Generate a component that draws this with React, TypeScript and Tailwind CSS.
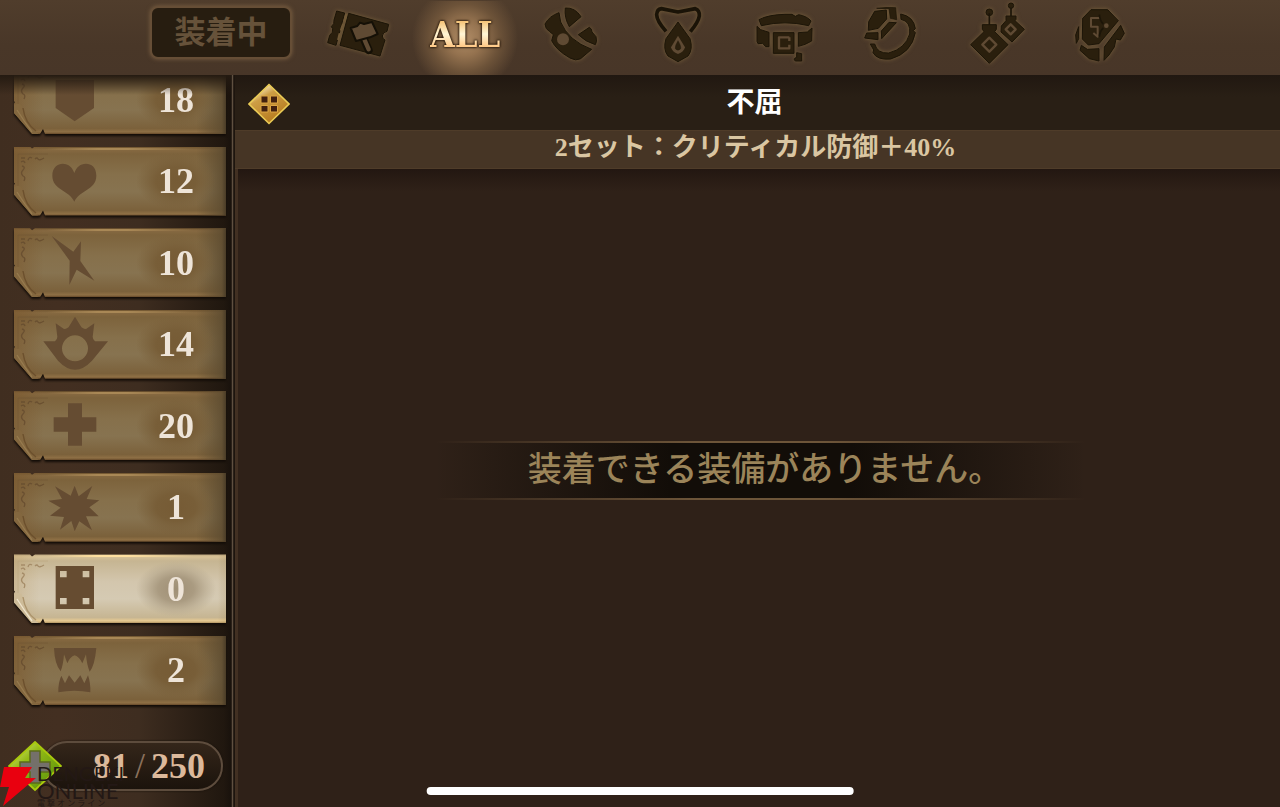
import React, { useState } from "react";

const INK = "#2a1f0d";
const GAP = "#5f4a33";

type Category = { id: string; label: string; viewBox: string; art: React.ReactNode };

const categories: Category[] = [
  {
    id: "ticket",
    label: "チケット",
    viewBox: "561 3 192 192",
    art: (
      <>
        <path d="M590 33 L614 39 L588 136 L563 128 L569 106 Q580 98 578 86 L574 80 Q584 72 582 60Z" />
        <path d="M626 40 L746 73 L741 94 Q728 96 727 108 Q728 118 735 120 L720 168 L600 136Z" />
        <path d="M619 42 L613 64 M609 72 L602 92 M599 100 L594 120" stroke="#6f5836" strokeWidth="6" fill="none" />
        <path d="M672 118 L686 150" stroke="#151006" strokeWidth="24" strokeLinecap="round" />
        <path d="M673 118 L686 148" stroke={GAP} strokeWidth="13" strokeLinecap="round" />
        <path d="M632 84 L652 78 L660 68 L672 72 L696 66 L713 102 L690 112 L648 123Z" fill={GAP} stroke="#151006" strokeWidth="6" />
      </>
    ),
  },
  {
    id: "glove",
    label: "腕輪",
    viewBox: "57 3 192 192",
    art: (
      <>
        <path d="M75 72 Q88 48 117 38 L122 66 Q145 122 215 148 L182 176 Q168 184 150 174 Q108 150 95 122 L100 104 L88 94 Q76 88 75 72Z" />
        <path d="M136 24 Q165 22 183 50 L148 80 Q132 52 136 24Z" />
        <path d="M175 104 L208 82 Q216 86 216 96 L228 110 Q232 125 226 134 Q195 125 175 104Z" />
        <circle cx="129" cy="118" r="18" fill={GAP} stroke="none" />
      </>
    ),
  },
  {
    id: "necklace",
    label: "首飾り",
    viewBox: "375 3 192 192",
    art: (
      <>
        <path d="M438 94 Q410 62 410 44 Q411 28 424 26 L474 36 L526 26 Q539 30 538 48 Q535 66 511 95" fill="none" stroke="#1a1307" strokeWidth="11" />
        <path d="M474 66 L510 116 Q520 148 504 168 L474 185 L444 168 Q428 148 438 116Z" />
        <path d="M474 107 L495 142 Q492 156 474 162 Q456 156 453 142Z" fill={GAP} stroke="none" />
        <path d="M474 122 Q484 138 482 146 Q474 155 466 146 Q464 138 474 122Z" strokeWidth="1" />
      </>
    ),
  },
  {
    id: "belt",
    label: "ベルト",
    viewBox: "693 3 192 192",
    art: (
      <>
        <path d="M717 59 Q745 44 795 43 L816 43 L826 49 L836 44 Q862 49 873 63 L866 77 Q795 60 724 77Z" />
        <path d="M711 79 L722 89 L747 97 L747 140 L737 140 L728 130 L714 131 L711 124Z" />
        <path d="M835 98 L862 96 L876 84 L875 123 Q856 135 835 139Z" />
        <rect x="760" y="98" width="62" height="62" />
        <path d="M808 112 H777 V145 H808 V134 M808 112 V123" fill="none" stroke={GAP} strokeWidth="7" />
        <path d="M830 158 L845 161 L845 183 L826 183 Q818 176 830 172Z" />
      </>
    ),
  },
  {
    id: "ring",
    label: "指輪",
    viewBox: "51 3 192 192",
    art: (
      <>
        <path d="M86 65 L104 34 L139 30 L140 57 L115 85 L85 91Z" />
        <path d="M110 25 L144 22 L167 23 L170 59 L151 55 L147 26Z" strokeWidth="2" />
        <path d="M147 67 L169 68 L125 116 L124 93Z" />
        <path d="M80 99 L114 98 L114 119 L74 114Z" />
        <path d="M182 42 Q221 49 226 86 L220 92 L226 98 Q215 159 152 177 Q112 181 99 158 L101 150 L91 132 L104 132 Q112 161 146 159 Q196 146 209 102 Q213 64 183 58Z" />
      </>
    ),
  },
  {
    id: "earring",
    label: "耳飾り",
    viewBox: "369 3 192 192",
    art: (
      <>
        <circle cx="448" cy="37" r="10" />
        <path d="M448 40 V74 M513 18 V48" strokeWidth="5" />
        <circle cx="513" cy="17" r="8" />
        <path d="M427 74 H469 V88 L464 95 L504 134 L448 190 L392 134 L432 95 L427 88Z" />
        <path d="M498 48 H528 V58 L525 62 L553 88 L516 126 L483 96 L484 78 L498 62Z" />
        <path d="M448 113 L469 134 L448 155 L427 134Z M512 73 L527 88 L512 103 L497 88Z" fill="none" stroke={GAP} strokeWidth="7" />
      </>
    ),
  },
  {
    id: "rune",
    label: "ルーン",
    viewBox: "687 3 192 192",
    art: (
      <>
        <path d="M753 29 L803 29 L835 62 L777 131 L745 135 L727 117 L728 55Z" />
        <path d="M780 54 H753 V80 H773 V110 L760 99" fill="none" stroke={GAP} strokeWidth="6" />
        <path d="M778 44 Q780 64 790 72 M778 110 Q780 92 790 84" fill="none" strokeWidth="5" />
        <circle cx="799" cy="77" r="7" fill={GAP} stroke="none" />
        <path d="M724 136 L742 148 L777 146 L777 183 L748 176 L720 151Z" />
        <path d="M842 76 L853 100 L841 120 L828 117 L823 141 L807 165 L792 181 L793 141Z" />
        <path d="M716 80 L716 116 L709 130 L707 105Z" />
      </>
    ),
  },
];

type SetItem = { id: string; label: string; count: number; d: string };

const sets: SetItem[] = [
  { id: "shield", label: "守護", count: 18, d: "M41 45H156V129L98 169L41 129Z" },
  { id: "heart", label: "生命", count: 12, d: "M97 164C82 130 31 128 31 86C31 60 48 50 62 50C80 50 92 62 97 78C102 62 114 50 132 50C148 50 163 60 163 86C163 128 112 130 97 164Z" },
  { id: "spark", label: "迅速", count: 10, d: "M29 24L94 71L117 40L115 99L157 158L104 125L82 171L83 98Z" },
  { id: "sun", label: "太陽", count: 14, d: "M4 94H39Q46 88 46 80L41 40L66 57Q78 56 82 48L99 20L116 48Q120 56 132 57L157 40L152 80Q152 88 159 94H198L150 152Q99 206 48 152ZM99 76A39 39 0 1 0 99 154A39 39 0 1 0 99 76Z" },
  { id: "cross", label: "治癒", count: 20, d: "M78 37H120V79H163V122H120V164H78V122H35V79H78Z" },
  { id: "burst", label: "破裂", count: 1, d: "M98 38L110 70L151 39L134 78L172 82L142 103L170 130L132 130L150 172L112 145L98 175L88 144L54 170L66 132L24 128L56 104L19 83L60 78L39 40L86 68Z" },
  { id: "dice", label: "不屈", count: 0, d: "M41 36H156V165H41ZM54 51V70H74V51ZM122 51V70H142V51ZM54 132V151H74V132ZM122 132V151H142V132Z" },
  { id: "fangs", label: "吸血", count: 2, d: "M36 36H163Q158 90 143 107Q134 85 132 55L121 82Q112 62 98 58Q84 62 76 82L66 55Q64 85 56 106Q38 85 36 36ZM49 169Q48 140 58 119L69 142L81 118L98 140L115 118L127 142L138 118Q146 140 145 169Q97 160 49 169Z" },
];

function CategoryIcon({ item }: { item: Category }) {
  return (
    <svg
      viewBox={item.viewBox}
      className="size-16 overflow-visible [filter:drop-shadow(0_0_2px_#77603b)]"
      fill={INK}
      stroke="#1c1508"
      strokeWidth="3"
      strokeLinejoin="round"
      aria-hidden="true"
    >
      {item.art}
    </svg>
  );
}

function SetPlate({ item, active, onSelect }: { item: SetItem; active: boolean; onSelect: () => void }) {
  const surface = active
    ? "bg-[linear-gradient(180deg,#b9a37c_0,#d9c397_4%,#c6b592_10%,#d3c6ad_40%,#d5cab3_65%,#c6b592_92%,#e8cb92_97%,#b09362_100%)]"
    : "bg-[linear-gradient(180deg,#735731_0,#866941_4%,#7d633c_10%,#86704b_40%,#877350_65%,#7b613b_92%,#8f7045_97%,#66492a_100%)]";
  return (
    <li className="[filter:drop-shadow(0_2px_1px_#120c07)]">
      <button
        type="button"
        aria-label={`${item.label} ${item.count}`}
        aria-pressed={active}
        onClick={onSelect}
        className={`relative flex h-[69px] w-full items-center pl-7 [clip-path:polygon(0_0,16px_0,18px_2px,21px_0,100%_0,100%_100%,31px_100%,29px_64px,26px_100%,18px_100%,0_48px,0_39px,1px_37px,0_36px)] ${surface}`}
      >
        <span
          className={`absolute inset-0 ${
            active
              ? "bg-[linear-gradient(90deg,#b7976055_0,transparent_12%,transparent_96%,#9b815033_100%)]"
              : "bg-[linear-gradient(90deg,#7b592faa_0,transparent_14%,transparent_86%,#5b4a2fcc_98%,#4a3c27_100%)]"
          }`}
        />
        <span
          className={`absolute inset-x-8 top-px h-0.5 ${
            active
              ? "bg-[linear-gradient(90deg,transparent,#ffe0a0_35%,#ffe0a0_55%,transparent)]"
              : "bg-[linear-gradient(90deg,transparent,#a98856_35%,#a98856_55%,transparent)]"
          }`}
        />
        <svg viewBox="0 0 34 69" className="absolute left-0 top-0 h-[69px] w-[34px]" fill="none" aria-hidden="true">
          <path d="M4 44V7H34" stroke={active ? "#bda680" : "#735835"} strokeWidth="1" opacity=".6" />
          <path d="M7 11h4M7 15q3-2 4 1M14 13q1-4 4-2M21 12q2-2 3 0t6-1M8 19q4 1 1 4t0 6q3 1 1 5" stroke={active ? "#a58c68" : "#6a5031"} strokeWidth="1.3" />
          <path d="M0 40Q8 36 9 45Q10 58 19 65L25 69H18L0 48Z" fill={active ? "#cdbb98" : "#83673f"} />
          <path d="M9 43Q11 58 22 66" stroke={active ? "#ac946c" : "#6c502d"} strokeWidth="1.4" />
          <path d="M3 45Q10 56 18 67" stroke={active ? "#efe4cc" : "#967a4e"} strokeWidth="1.3" />
        </svg>
        <svg viewBox="0 0 198 207" className="relative h-[69px] w-[66px]" fill={active ? "#664c31" : "#654c32"} fillRule="evenodd" aria-hidden="true">
          <path d={item.d} />
        </svg>
        <span
          className={`relative ml-7 flex h-14 w-20 items-center justify-center font-['Liberation_Serif',serif] text-4xl font-bold text-[#eee4d8] ${
            active
              ? "bg-[radial-gradient(closest-side,#9f8f75_0,#aa9b81_45%,#b7a98f99_75%,transparent_100%)]"
              : "bg-[radial-gradient(closest-side,#765b35_0,#785e38_50%,transparent_100%)]"
          }`}
        >
          {item.count}
        </span>
      </button>
    </li>
  );
}

function Watermark() {
  return (
    <div className="pointer-events-none absolute bottom-0 left-0 flex items-end gap-px">
      <svg viewBox="0 0 36 42" className="h-[42px] w-9" aria-hidden="true">
        <path d="M4 2H32L25 13H36L3 41L9 22H0Z" fill="#e9000f" />
      </svg>
      <div className="font-[Lato,'Noto_Sans_CJK_JP',sans-serif] text-[#231815]">
        <div className="text-xl leading-[17px]">DENGEKI</div>
        <div className="text-[22px] leading-[17px]">ONLINE</div>
        <div className="text-[8px] leading-[8px]">電 撃 オ ン ラ イ ン</div>
      </div>
    </div>
  );
}

export default function App() {
  const [category, setCategory] = useState("all");
  const [selected, setSelected] = useState("dice");

  const renderCategory = (item: Category) => (
    <button
      key={item.id}
      type="button"
      aria-label={item.label}
      aria-pressed={category === item.id}
      onClick={() => setCategory(item.id)}
      className="flex w-[106px] justify-center"
    >
      <CategoryIcon item={item} />
    </button>
  );

  return (
    <div className="relative flex h-screen flex-col overflow-hidden bg-[#2f2118] font-['Noto_Sans_CJK_JP',sans-serif]">
      <header className="relative z-10 flex h-[75px] shrink-0 items-start bg-[linear-gradient(180deg,#503d2c,#493728_60%,#483628)] pl-[150px] pt-px">
        <button
          type="button"
          className="mt-[5px] h-[53px] w-[142px] rounded-lg border-2 border-[#664e36] bg-[#271d10] pb-1.5 text-[31px] font-bold leading-none text-[#66523a] shadow-[0_0_4px_#7a6043]"
        >
          装着中
        </button>
        <nav className="ml-3.5 flex" aria-label="装備の種類">
          {renderCategory(categories[0])}
          <button
            type="button"
            aria-pressed={category === "all"}
            onClick={() => setCategory("all")}
            className="flex h-[74px] w-[106px] items-center justify-center bg-[radial-gradient(circle_at_50%_50%,#b08c66_0,#94724f_18px,#6d5339_34px,transparent_53px)] pb-2"
          >
            <span className="bg-[linear-gradient(180deg,#f5c478_15%,#fff6d6_50%,#ffc987_85%)] bg-clip-text font-['DejaVu_Serif_Condensed','DejaVu_Serif',serif] text-4xl font-bold leading-none text-transparent [filter:drop-shadow(0_0_1px_#2a1a0c)_drop-shadow(0_0_1px_#2a1a0c)]">
              ALL
            </span>
          </button>
          {categories.slice(1).map(renderCategory)}
        </nav>
      </header>

      <div className="flex min-h-0 flex-1">
        <aside className="relative flex w-[231px] shrink-0 flex-col bg-[linear-gradient(90deg,#402e20_0,#432f21_25%,#3e2d20_60%,#20170f_97%,#19120c_100%)]">
          <ul className="-mt-2.5 flex min-h-0 flex-1 flex-col justify-between pl-3.5 pr-[5px]">
            {sets.map((item) => (
              <SetPlate key={item.id} item={item} active={selected === item.id} onSelect={() => setSelected(item.id)} />
            ))}
          </ul>
          <div className="pointer-events-none absolute inset-x-0 top-0 h-5 bg-gradient-to-b from-[#241a11] to-transparent" />
          <footer className="flex h-[102px] shrink-0 items-start pl-2 pr-2 pt-9">
            <button type="button" aria-label="所持枠を増やす" className="relative">
              <svg viewBox="0 0 54 52" className="h-[52px] w-[54px]" aria-hidden="true">
                <defs>
                  <linearGradient id="lime" x1="0" y1="0" x2="1" y2="1">
                    <stop offset="0" stopColor="#e6ee9a" />
                    <stop offset=".35" stopColor="#95bb16" />
                    <stop offset="1" stopColor="#4f8a08" />
                  </linearGradient>
                </defs>
                <path d="M27 1L53 25L27 49L1 25Z" fill="url(#lime)" stroke="#a9c90d" strokeWidth="1.8" />
                <path d="M22 10H32V21H42V31H32V42H22V31H12V21H22Z" fill="#74706a" stroke="#5c6a1c" strokeWidth="1.5" />
              </svg>
            </button>
            <p className="-ml-5 flex h-[50px] flex-1 items-center justify-end gap-1.5 rounded-full border-2 border-[#5d4c3d] bg-[linear-gradient(180deg,#34261a,#1b130c)] pr-4 font-['Liberation_Serif',serif] text-4xl font-bold text-[#dcb99b] shadow-[0_0_2px_#120c07]">
              <span>81</span>
              <span className="font-normal text-[#8b715c]">/</span>
              <span>250</span>
            </p>
          </footer>
        </aside>

        <div className="w-[3px] shrink-0 border-x border-[#2b2119] bg-[#5f5040]" />

        <main className="flex min-w-0 flex-1 flex-col border-l border-[#1d150e]">
          <div className="relative flex h-[55px] shrink-0 items-center justify-center bg-[linear-gradient(180deg,#211811,#291f15_40%)]">
            <svg viewBox="0 0 42 42" className="absolute left-[13px] top-2 size-[42px]" aria-hidden="true">
              <defs>
                <linearGradient id="gold" x1="0" y1="0" x2=".6" y2="1">
                  <stop offset=".2" stopColor="#f4dfae" />
                  <stop offset=".4" stopColor="#cd9e45" />
                  <stop offset="1" stopColor="#b5791d" />
                </linearGradient>
              </defs>
              <path d="M21 1.5L41 21L21 40.500L1 21Z" fill="url(#gold)" stroke="#eacb55" strokeWidth="1.6" />
              <path d="M13 13H20V20H13ZM22.500 13H29.500V20H22.500ZM13 22.500H20V29H13ZM22.500 22.500H29.500V29H22.500Z" fill="#42210f" stroke="#dca644" strokeWidth="1" />
            </svg>
            <h1 className="pb-1.5 pr-1.5 text-[28px] font-bold leading-none text-white">不屈</h1>
          </div>
          <p className="flex h-[39px] shrink-0 items-center justify-center border-y border-[#4f3c29] bg-[#463525] pb-1 pr-1 font-['Liberation_Serif','Noto_Sans_CJK_JP',serif] text-[26px] font-bold leading-none text-[#dac6a2]">
            2セット：クリティカル防御＋40%
          </p>
          <section className="flex min-h-0 flex-1 items-center justify-center border-l-[3px] border-[#423022] bg-[linear-gradient(180deg,#231711_0,#2f2118_22px)] pb-9 pl-1">
            <div className="w-[650px] max-w-full">
              <div className="h-0.5 bg-[linear-gradient(90deg,transparent,#6d5539_40%,#6d5539_60%,transparent)]" />
              <p className="flex h-[55px] items-center justify-center bg-[linear-gradient(90deg,transparent,#120d08_36%,#120d08_64%,transparent)] pb-1.5 pl-2 text-[34px] font-medium leading-none text-[#9b8459]">
                装着できる装備がありません。
              </p>
              <div className="h-0.5 bg-[linear-gradient(90deg,transparent,#6d5539_40%,#6d5539_60%,transparent)]" />
            </div>
          </section>
        </main>
      </div>

      <Watermark />
      <div className="pointer-events-none absolute bottom-3 left-1/2 h-2 w-1/3 -translate-x-1/2 rounded-full bg-white" />
    </div>
  );
}
